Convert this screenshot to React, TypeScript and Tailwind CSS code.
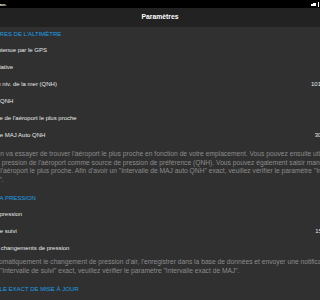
import React from "react"

function Cut(props: { hidden: string; shown: string; className?: string }) {
  return (
    <div className={`flex whitespace-nowrap ${props.className ?? ""}`}>
      <span className="flex w-0 shrink-0 justify-end">{props.hidden}</span>
      <span>{props.shown}</span>
    </div>
  )
}

function Row(props: {
  hidden: string
  shown: string
  ml: string
  value?: string
  vw?: string
}) {
  return (
    <div className="flex h-[17px] items-center text-[6px] leading-[7px] text-[#e8e8e8]">
      <div className="min-w-0 flex-1">
        <Cut hidden={props.hidden} shown={props.shown} className={props.ml} />
      </div>
      {props.value && (
        <div className={`${props.vw} shrink-0 whitespace-nowrap`}>{props.value}</div>
      )}
    </div>
  )
}

function Header(props: { hidden: string; shown: string; h: string }) {
  return (
    <div className={`flex ${props.h} items-end pb-[4px] text-[6px] leading-[7px] text-[#1e9ee6]`}>
      <Cut hidden={props.hidden} shown={props.shown} className="-ml-[0.4px]" />
    </div>
  )
}

export default function App() {
  return (
    <div
      className="h-[300px] w-[320px] overflow-hidden bg-[#303030]"
      style={{ fontFamily: '"Liberation Sans", Arial, sans-serif' }}
    >
      <div className="flex h-[8px] items-center justify-between bg-black">
        <Cut hidden="9:41 mar. 5 " shown="avr." className="-ml-[0.5px] text-[4px] font-bold leading-[5px] text-white" />
        <div className="mr-[1.5px] flex items-center gap-[1.5px]">
          <div className="flex items-end gap-[0.5px]">
            <div className="h-[2px] w-[1.5px] bg-white" />
            <div className="h-[3px] w-[3px] bg-white" />
          </div>
          <div className="h-[5px] w-[0.8px] bg-white" />
        </div>
      </div>

      <div className="flex h-[19px] items-center justify-center bg-[#222222] text-[6.8px] font-bold text-white">
        Paramètres
      </div>

      <Header hidden="PARAMÈT" shown="RES DE L'ALTIMÈTRE" h="h-[15px]" />
      <Row hidden="Altitude ob" shown="tenue par le GPS" ml="ml-[1px]" />
      <Row hidden="Altitude rel" shown="ative" ml="ml-[0.5px]" />
      <Row
        hidden="Pression au"
        shown={"\u00a0niv. de la mer (QNH)"}
        ml="ml-[0.7px]"
        value="1013.25 hPa"
        vw="w-[9px]"
      />
      <Row hidden={"Saisie manuelle du\u00a0"} shown="QNH" ml="ml-[0px]" />
      <Row hidden="Pression d" shown="e de l'aéroport le plus proche" ml="-ml-[0.5px]" />
      <Row
        hidden="Intervall"
        shown="e MAJ Auto QNH"
        ml="-ml-[0.3px]"
        value="30 min"
        vw="w-[5.3px]"
      />

      <div className="pt-[6px] text-[6.7px] leading-[8.5px] text-[#8c8c8c]">
        <Cut
          hidden="L'applicatio"
          shown="n va essayer de trouver l'aéroport le plus proche en fonction de votre emplacement. Vous pouvez ensuite utiliser la"
          className="ml-[0.3px]"
        />
        <Cut
          hidden={"la\u00a0"}
          shown="pression de l'aéroport comme source de pression de préférence (QNH). Vous pouvez également saisir manuellement la pression de"
          className="ml-[1.8px]"
        />
        <Cut
          hidden={"pression de\u00a0"}
          shown={'l\'aéroport le plus proche. Afin d\'avoir un "Intervalle de MAJ auto QNH" exact, veuillez vérifier le paramètre "Intervalle exact de MA'}
          className="ml-[0.3px]"
        />
        <Cut hidden="de MAJ" shown={'".'} className="-ml-[0.5px]" />
      </div>

      <Header hidden="SUIVI DE L" shown="A PRESSION" h="h-[21.5px]" />
      <Row hidden={"Suivi de la\u00a0"} shown="pression" ml="-ml-[0.5px]" />
      <Row
        hidden="Intervall"
        shown="e suivi"
        ml="-ml-[0.3px]"
        value="15 min"
        vw="w-[4.7px]"
      />
      <Row hidden={"Notifier les\u00a0"} shown="changements de pression" ml="ml-[0.7px]" />

      <div className="pt-[1.5px] text-[6.7px] leading-[8.5px] text-[#8c8c8c]">
        <Cut
          hidden="Surveiller aut"
          shown="omatiquement le changement de pression d'air, l'enregistrer dans la base de données et envoyer une notification"
          className="-ml-[1px]"
        />
        <Cut
          hidden={"un\u00a0"}
          shown={'"Intervalle de suivi" exact, veuillez vérifier le paramètre "Intervalle exact de MAJ".'}
          className="ml-[0px]"
        />
      </div>

      <Header hidden="INTERVAL" shown="LE EXACT DE MISE À JOUR" h="h-[22px]" />
    </div>
  )
}
